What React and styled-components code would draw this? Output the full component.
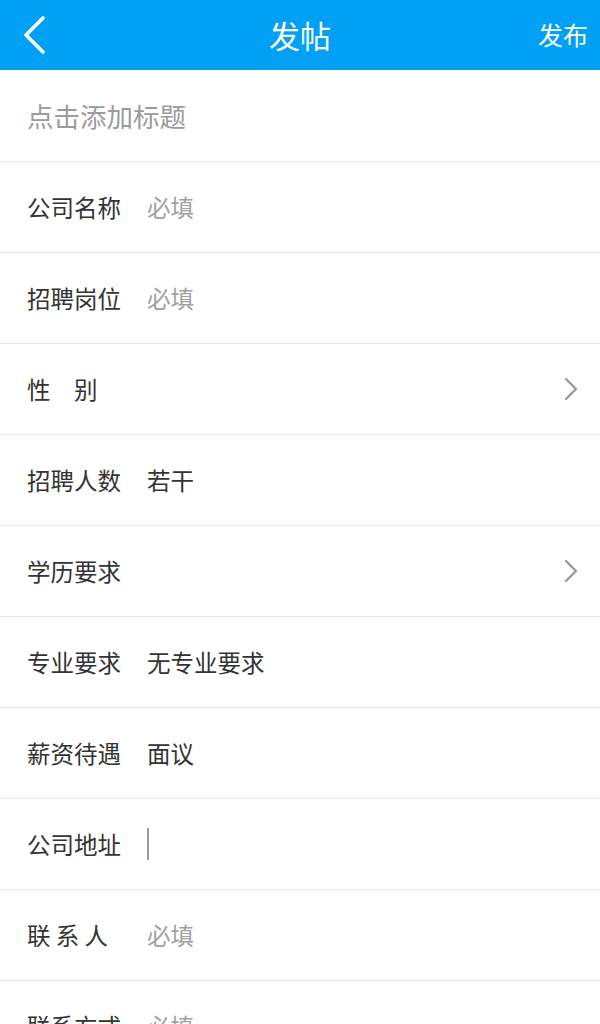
import React from "react";
import styled, { createGlobalStyle } from "styled-components";

const GlobalStyle = createGlobalStyle`
  html, body {
    margin: 0;
    padding: 0;
    background: #fff;
    font-family: "Noto Sans CJK SC", "Noto Sans", sans-serif;
  }
`;

// 表单字段
const fields = [
  { label: "公司名称", value: "必填", placeholder: true },
  { label: "招聘岗位", value: "必填", placeholder: true },
  { label: "性\u3000别", arrow: true },
  { label: "招聘人数", value: "若干" },
  { label: "学历要求", arrow: true },
  { label: "专业要求", value: "无专业要求" },
  { label: "薪资待遇", value: "面议" },
  { label: "公司地址", cursor: true },
  { label: "联 系 人", value: "必填", placeholder: true },
  { label: "联系方式", value: "必填", placeholder: true },
];

const App = () => {
  return (
    <>
      <GlobalStyle />
      <Page>
        <Header>
          <BackButton>
            <svg width="26" height="40" viewBox="0 0 26 40">
              <path
                d="M22 3 L5 20 L22 37"
                fill="none"
                stroke="#fff"
                strokeWidth="3.6"
                strokeLinecap="round"
                strokeLinejoin="round"
              />
            </svg>
          </BackButton>
          <HeaderTitle>发帖</HeaderTitle>
          <Publish>发布</Publish>
        </Header>

        <TitleRow>
          <TitlePlaceholder>点击添加标题</TitlePlaceholder>
        </TitleRow>

        {fields.map((f, i) => (
          <Row key={i}>
            <Label>{f.label}</Label>
            {f.value && <Value placeholder={f.placeholder}>{f.value}</Value>}
            {f.cursor && <Cursor />}
            {f.arrow && (
              <Arrow>
                <svg width="14" height="24" viewBox="0 0 14 24">
                  <path
                    d="M2 2 L12 12 L2 22"
                    fill="none"
                    stroke="#9a9a9a"
                    strokeWidth="2.4"
                    strokeLinecap="round"
                    strokeLinejoin="round"
                  />
                </svg>
              </Arrow>
            )}
          </Row>
        ))}
      </Page>
    </>
  );
};

export default App;

const Page = styled.div`
  width: 600px;
  height: 1024px;
  overflow: hidden;
  background: #fff;
`;

const Header = styled.div`
  height: 70px;
  background: #00a0f5;
  display: flex;
  align-items: center;
  justify-content: space-between;
  padding: 0 12px 0 21px;
  position: relative;
`;

const BackButton = styled.div`
  display: flex;
  align-items: center;
  width: 60px;
`;

const HeaderTitle = styled.div`
  position: absolute;
  left: 0;
  right: 0;
  text-align: center;
  color: #fff;
  font-size: 31px;
  line-height: 70px;
  pointer-events: none;
`;

const Publish = styled.div`
  color: #fff;
  font-size: 25px;
  margin-top: -3px;
`;

const TitleRow = styled.div`
  height: 91px;
  display: flex;
  align-items: center;
  padding-left: 27px;
  border-bottom: 1px solid #e6e6e6;
`;

const TitlePlaceholder = styled.div`
  font-size: 26.5px;
  color: #9b9b9b;
`;

const Row = styled.div`
  height: 90px;
  display: flex;
  align-items: center;
  padding: 0 22px 0 27px;
  border-bottom: 1px solid #e6e6e6;
`;

const Label = styled.div`
  width: 120px;
  font-size: 23.5px;
  color: #333;
  white-space: pre;
`;

const Value = styled.div`
  font-size: 23.5px;
  color: ${(props) => (props.placeholder ? "#a0a0a0" : "#333")};
`;

const Cursor = styled.div`
  width: 2px;
  height: 32px;
  background: #999;
`;

const Arrow = styled.div`
  margin-left: auto;
  display: flex;
  align-items: center;
`;
